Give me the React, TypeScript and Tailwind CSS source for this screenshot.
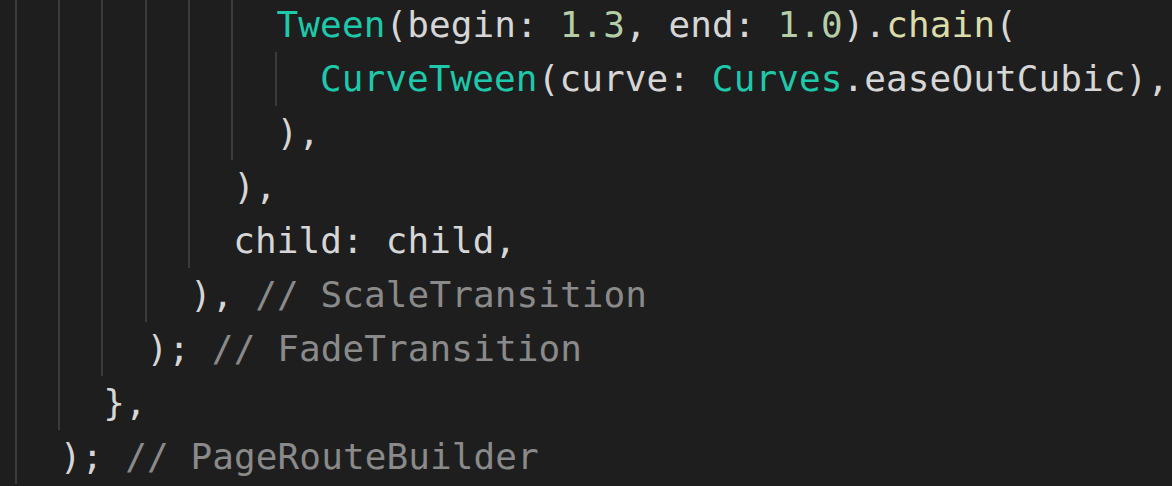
type Tok = { t: string; c?: "type" | "num" | "fn" | "label" };

const lines: { indent: number; toks: Tok[] }[] = [
  {
    indent: 12,
    toks: [
      { t: "Tween", c: "type" },
      { t: "(begin: " },
      { t: "1.3", c: "num" },
      { t: ", end: " },
      { t: "1.0", c: "num" },
      { t: ")." },
      { t: "chain", c: "fn" },
      { t: "(" },
    ],
  },
  {
    indent: 14,
    toks: [
      { t: "CurveTween", c: "type" },
      { t: "(curve: " },
      { t: "Curves", c: "type" },
      { t: ".easeOutCubic)," },
    ],
  },
  { indent: 12, toks: [{ t: ")," }] },
  { indent: 10, toks: [{ t: ")," }] },
  { indent: 10, toks: [{ t: "child: child," }] },
  { indent: 8, toks: [{ t: "), " }, { t: "// ScaleTransition", c: "label" }] },
  { indent: 6, toks: [{ t: "); " }, { t: "// FadeTransition", c: "label" }] },
  { indent: 4, toks: [{ t: "}," }] },
  { indent: 2, toks: [{ t: "); " }, { t: "// PageRouteBuilder", c: "label" }] },
];

const colour = {
  type: "text-[#1ec8aa]",
  num: "text-[#b5cea8]",
  fn: "text-[#dcdcaa]",
  label: "text-[#8a8a8a]",
};

export default function App() {
  return (
    <div className="h-[486px] w-full overflow-hidden bg-[#1e1e1e] pl-[14.5px] font-['DejaVu_Sans_Mono','Liberation_Mono',monospace] text-[36px] text-[#d6d6d6]">
      <div className="-mt-[2px] flex flex-col">
        {lines.map((line, i) => (
          <div key={i} className="flex h-[54px] items-stretch whitespace-pre leading-[54px]">
            {Array.from({ length: line.indent / 2 }).map((_, g) => (
              <span key={g} className="w-[2ch] shrink-0 border-l-2 border-[#3b3b3b]" />
            ))}
            <span className="ml-[2px] tracking-[0.1px]">
              {line.toks.map((tok, k) => (
                <span key={k} className={tok.c ? colour[tok.c] : undefined}>
                  {tok.t}
                </span>
              ))}
            </span>
          </div>
        ))}
      </div>
    </div>
  );
}
